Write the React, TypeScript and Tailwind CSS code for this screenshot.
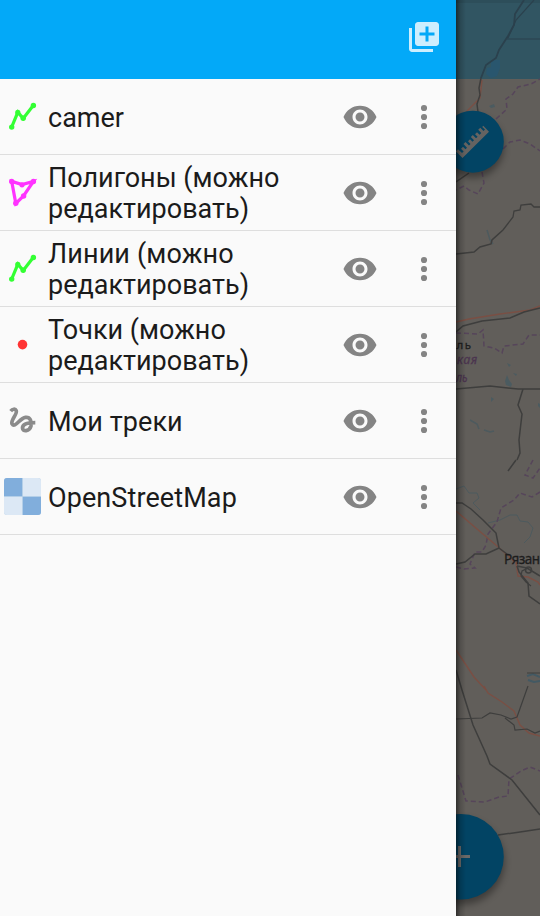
import type { ReactNode } from "react";

function LineIcon() {
  return (
    <svg width="45" height="45" viewBox="0 0 45 45" fill="#33ff33" stroke="#33ff33">
      <path d="M11.7 33 17.8 18.3 23.2 24.4 33.4 11.3" fill="none" strokeWidth="3.2" />
      <g stroke="none">
        <circle cx="11.7" cy="33.1" r="2.7" />
        <circle cx="17.8" cy="18.4" r="2.6" />
        <circle cx="23.2" cy="24.3" r="2.7" />
        <circle cx="33.4" cy="11.5" r="2.7" />
      </g>
    </svg>
  );
}

function PolygonIcon() {
  return (
    <svg width="45" height="45" viewBox="0 0 45 45" fill="#ff33ff" stroke="#ff33ff">
      <path d="M11.7 11.4 22 14.6 33.4 11.4 23.5 25.9 15.8 33.4Z" fill="none" strokeWidth="3.2" />
      <g stroke="none">
        <circle cx="11.7" cy="11.5" r="2.7" />
        <circle cx="22" cy="14.8" r="2.6" />
        <circle cx="33.4" cy="11.5" r="2.7" />
        <circle cx="23.6" cy="26" r="2.7" />
        <circle cx="15.8" cy="33.3" r="2.7" />
      </g>
    </svg>
  );
}

function PointIcon() {
  return (
    <svg width="45" height="45" viewBox="0 0 45 45">
      <circle cx="22.5" cy="22.6" r="4.8" fill="#ff3333" />
    </svg>
  );
}

function TrackIcon() {
  return (
    <svg width="45" height="45" viewBox="0 0 45 45">
      <path
        d="M10.7 13.2C12.5 10.9 15.3 10.5 16.2 12.6C17.8 16 10.5 21.5 12 25.8C15 30.8 19.5 20.2 25.5 19.4C30.3 18.8 32 23.5 31 28C29.5 33.6 22.5 34 22.5 29.9C22.5 26.4 27 24.7 35.3 24.7"
        fill="none"
        stroke="#8b8b8b"
        strokeWidth="3.7"
      />
    </svg>
  );
}

function TilesIcon() {
  return (
    <div className="ml-1 grid h-[37px] w-[37px] grid-cols-2 gap-px overflow-hidden rounded-[3px] bg-[#b4cfe8]">
      <div className="bg-[#81aedc]" />
      <div className="bg-[#dce8f5]" />
      <div className="bg-[#dce8f5]" />
      <div className="bg-[#81aedc]" />
    </div>
  );
}

function EyeIcon() {
  return (
    <svg width="36" height="36" viewBox="0 0 24 24" fill="#848484">
      <path d="M12 4.5C7 4.5 2.73 7.61 1 12c1.73 4.39 6 7.5 11 7.5s9.27-3.11 11-7.5c-1.73-4.39-6-7.5-11-7.5zM12 17c-2.76 0-5-2.24-5-5s2.24-5 5-5 5 2.24 5 5-2.24 5-5 5zm0-8c-1.66 0-3 1.34-3 3s1.34 3 3 3 3-1.34 3-3-1.34-3-3-3z" />
    </svg>
  );
}

function MoreIcon() {
  return (
    <svg width="36" height="36" viewBox="0 0 24 24" fill="#848484">
      <circle cx="12" cy="6" r="2.05" />
      <circle cx="12" cy="12" r="2.05" />
      <circle cx="12" cy="18" r="2.05" />
    </svg>
  );
}

function AddLayerIcon() {
  return (
    <svg width="36" height="36" viewBox="0 0 24 24" fill="#cdeefe">
      <path d="M4 6H2v14c0 1.1.9 2 2 2h14v-2H4V6zm16-4H8c-1.1 0-2 .9-2 2v12c0 1.1.9 2 2 2h12c1.1 0 2-.9 2-2V4c0-1.1-.9-2-2-2zm-1 9h-4v4h-2v-4H9V9h4V5h2v4h4v2z" />
    </svg>
  );
}

const layers: { name: string; icon: ReactNode; className: string }[] = [
  { name: "camer", icon: <LineIcon />, className: "pt-1" },
  { name: "Полигоны (можно редактировать)", icon: <PolygonIcon />, className: "pt-0.5" },
  { name: "Линии (можно редактировать)", icon: <LineIcon />, className: "pt-0.5 first-line:tracking-[0.13px]" },
  { name: "Точки (можно редактировать)", icon: <PointIcon />, className: "pt-0.5" },
  { name: "Мои треки", icon: <TrackIcon />, className: "pt-1 tracking-[0.1px]" },
  { name: "OpenStreetMap", icon: <TilesIcon />, className: "pt-1 tracking-[0.1px]" },
];

function LayerRow({ name, icon, className }: { name: string; icon: ReactNode; className: string }) {
  return (
    <li className="flex h-[76px] items-center border-b border-[#dedede]">
      <div className="flex w-12 shrink-0 items-center">{icon}</div>
      <span className={`w-[270px] text-[27px] leading-[31px] text-[#1b1b1b] ${className}`}>{name}</span>
      <button className="ml-6 shrink-0">
        <EyeIcon />
      </button>
      <button className="ml-7 shrink-0">
        <MoreIcon />
      </button>
    </li>
  );
}

function MapStrip() {
  return (
    <svg width="84" height="916" viewBox="456 0 84 916" className="block" fill="none">
      <defs>
        <linearGradient id="edge" x1="0" x2="1" y1="0" y2="0">
          <stop offset="0" stopColor="#000" stopOpacity="0.5" />
          <stop offset="0.45" stopColor="#000" stopOpacity="0.16" />
          <stop offset="1" stopColor="#000" stopOpacity="0" />
        </linearGradient>
        <filter id="soft" x="-30%" y="-30%" width="160%" height="160%">
          <feGaussianBlur stdDeviation="3.5" />
        </filter>
      </defs>
      <rect x="456" y="0" width="84" height="916" fill="#615e5a" />
      <rect x="456" y="0" width="84" height="79" fill="#315562" />
      <rect x="456" y="0" width="84" height="3" fill="#000" opacity="0.08" />

      <path d="M491 60 500 60 500 68 497 76 491 78 486 74 487 68 491 67Z" fill="#285672" opacity="0.8" />
      <path d="M489 106l5-2 1 3-4 1zM507 375l-2 6 1 4 5 2 1-3-3-4zM507 363l4 2-2 2zM513 373l4 1-1 2zM491 397l3 2-3 3zM538 403l2 1v4l-2-2z" fill="#4b5b60" />

      <g stroke="#4d5a5e" strokeWidth="1.5">
        <path d="M487 230 490 240 493 244M470 420 477 424 479 429M484 430 490 432 494 431" />
        <g strokeWidth="1">
          <path d="M456 489 464 486 469 493 477 493 479 498 473 503 480 510M488 523 500 520 510 515 517 515 520 521 528 522 533 528 530 537 524 543" />
        </g>
      </g>
      <path d="M527 676 533 674 540 677M528 680 534 682 540 681" stroke="#435963" strokeWidth="2" />

      <g stroke="#56455a" strokeWidth="1.5" strokeDasharray="5 3">
        <path d="M496 119 507 109 506 99 513 94 518 87 531 84 540 79" />
        <path d="M503 149 510 142 520 140 530 144 540 151" />
        <path d="M482 172 484 183 478 194 469 190 464 186 456 190" />
        <path d="M456 333 478 334 483 330 484 346 494 348 502 353 504 346 523 344 529 335 540 335" />
        <path d="M540 492 532 497 520 493 514 500 501 508 497 522 488 534 486 545 482 552 475 552 470 564 475 568 464 569 456 567" />
        <path d="M533 460 525 475 533 478 540 468" />
        <path d="M458 775 466 801 485 802 499 797 508 796 509 779 521 771 530 767 540 771" />
      </g>

      <g stroke="#7a4f44" strokeWidth="1.4">
        <path d="M482 80 480 98 466 112" />
        <path d="M456 322 469 319 500 314 530 310 540 306" />
        <path d="M456 511 497 546 516 563 518 576 528 577 538 582 540 585" />
        <path d="M456 650 474 677 486 690" />
        <path d="M484 686 488 693 502 702 514 711 520 725 529 733 540 736" />
      </g>

      <g stroke="#2b414d" strokeWidth="1.8">
        <path d="M524 0 515 14 514 25 508 36 499 50 496 58 486 65 481 78" />
        <path d="M507 39H540M534 0 516 20 508 38" strokeWidth="1.2" />
      </g>
      <g stroke="#3e3e3d" strokeWidth="1.5">
        <path d="M481 78 479 88 480 95 477 104 478 112M456 182 469 173" />
        <path d="M503 230 513 217 514 211 520 210 521 205 531 204 534 207 540 207" strokeWidth="1.3" />
        <path d="M456 254 474 252 480 247 491 244 492 240 503 230" />
        <path d="M456 332 463 326 482 321 510 318 524 312 540 308M456 389 490 386 518 389H540M523 389 518 405 522 414 519 440 520 453 517 460" />
        <path d="M516 460 508 471M456 503H462L471 509 483 520 496 533 499 548 507 554M456 564 465 562 475 554 486 554 499 548" />
        <path d="M517 566 527 568 540 576M517 566 519 572 528 583 529 596 540 604" />
        <path d="M528 568 522 571 521 576 526 582 531 586" strokeWidth="1.2" />
        <circle cx="528.5" cy="570" r="3" />
        <path d="M456 670 462 690 473 725 487 756 490 764 512 780 540 815" />
        <path d="M456 719 482 718 490 713 501 715 511 719 517 717 528 686M505 718 514 725 515 730 527 729 535 733 540 731" strokeWidth="1.2" />
        <path d="M498 835 520 832 540 829" />
        <path d="M527 673H540" strokeWidth="1" />
      </g>

      <g className="font-['Noto_Sans','DejaVu_Sans',sans-serif]">
        <text x="456.5" y="349" fontSize="11.5" fill="#1e1e1e" stroke="#1e1e1e" strokeWidth="0.3" textLength="14.5">ль</text>
        <text x="457" y="363.5" fontSize="12" fontStyle="italic" fill="#4b354f" stroke="#4b354f" strokeWidth="0.3" textLength="20">кая</text>
        <text x="456" y="382" fontSize="12" fontStyle="italic" fill="#4b354f" stroke="#4b354f" strokeWidth="0.3" textLength="11.5" lengthAdjust="spacingAndGlyphs">ль</text>
        <text x="504" y="564" fontSize="13.5" fill="#1d1d1d" stroke="#1d1d1d" strokeWidth="0.3" textLength="36">Рязан</text>
      </g>

      <circle cx="473" cy="147" r="31" fill="#000" opacity="0.35" filter="url(#soft)" />
      <circle cx="472.8" cy="141.7" r="31" fill="#024464" />
      <path
        d="M456 151.2 458 149.2 462 153 463.6 151.4 461 148.8 463 146.8 465.5 149.3 467 147.7 463.5 144 465.5 142 469 145.5 470.5 144 468 141.3 470 139.3 472.5 141.8 474 140.3 470.8 137 472.8 135 476 138.3 477.6 136.7 475 134.2 477 132.2 479.6 134.8 481.3 133 478.2 129.8 480.3 127.8 483.5 131 485 129.5 482.2 127 483.3 125.8 489 131.7 462.5 158 456 151.5Z"
        fill="#656361"
      />

      <circle cx="461.5" cy="862" r="43" fill="#000" opacity="0.35" filter="url(#soft)" />
      <circle cx="461" cy="856.8" r="42.8" fill="#024464" />
      <path d="M456 856.5H470M459.5 846V867" stroke="#6b6968" strokeWidth="3" />
      <rect x="456" y="0" width="10" height="916" fill="url(#edge)" />
    </svg>
  );
}

export default function App() {
  return (
    <main className="flex h-[916px] w-[540px] overflow-hidden font-['Roboto',sans-serif]">
      <aside className="flex w-[456px] shrink-0 flex-col bg-[#fafafa]">
        <header className="flex h-[79px] shrink-0 items-center justify-end bg-[#03a9f8] pr-[14px] pb-[5px]">
          <button>
            <AddLayerIcon />
          </button>
        </header>
        <ul>
          {layers.map((layer) => (
            <LayerRow key={layer.name} {...layer} />
          ))}
        </ul>
      </aside>
      <MapStrip />
    </main>
  );
}
